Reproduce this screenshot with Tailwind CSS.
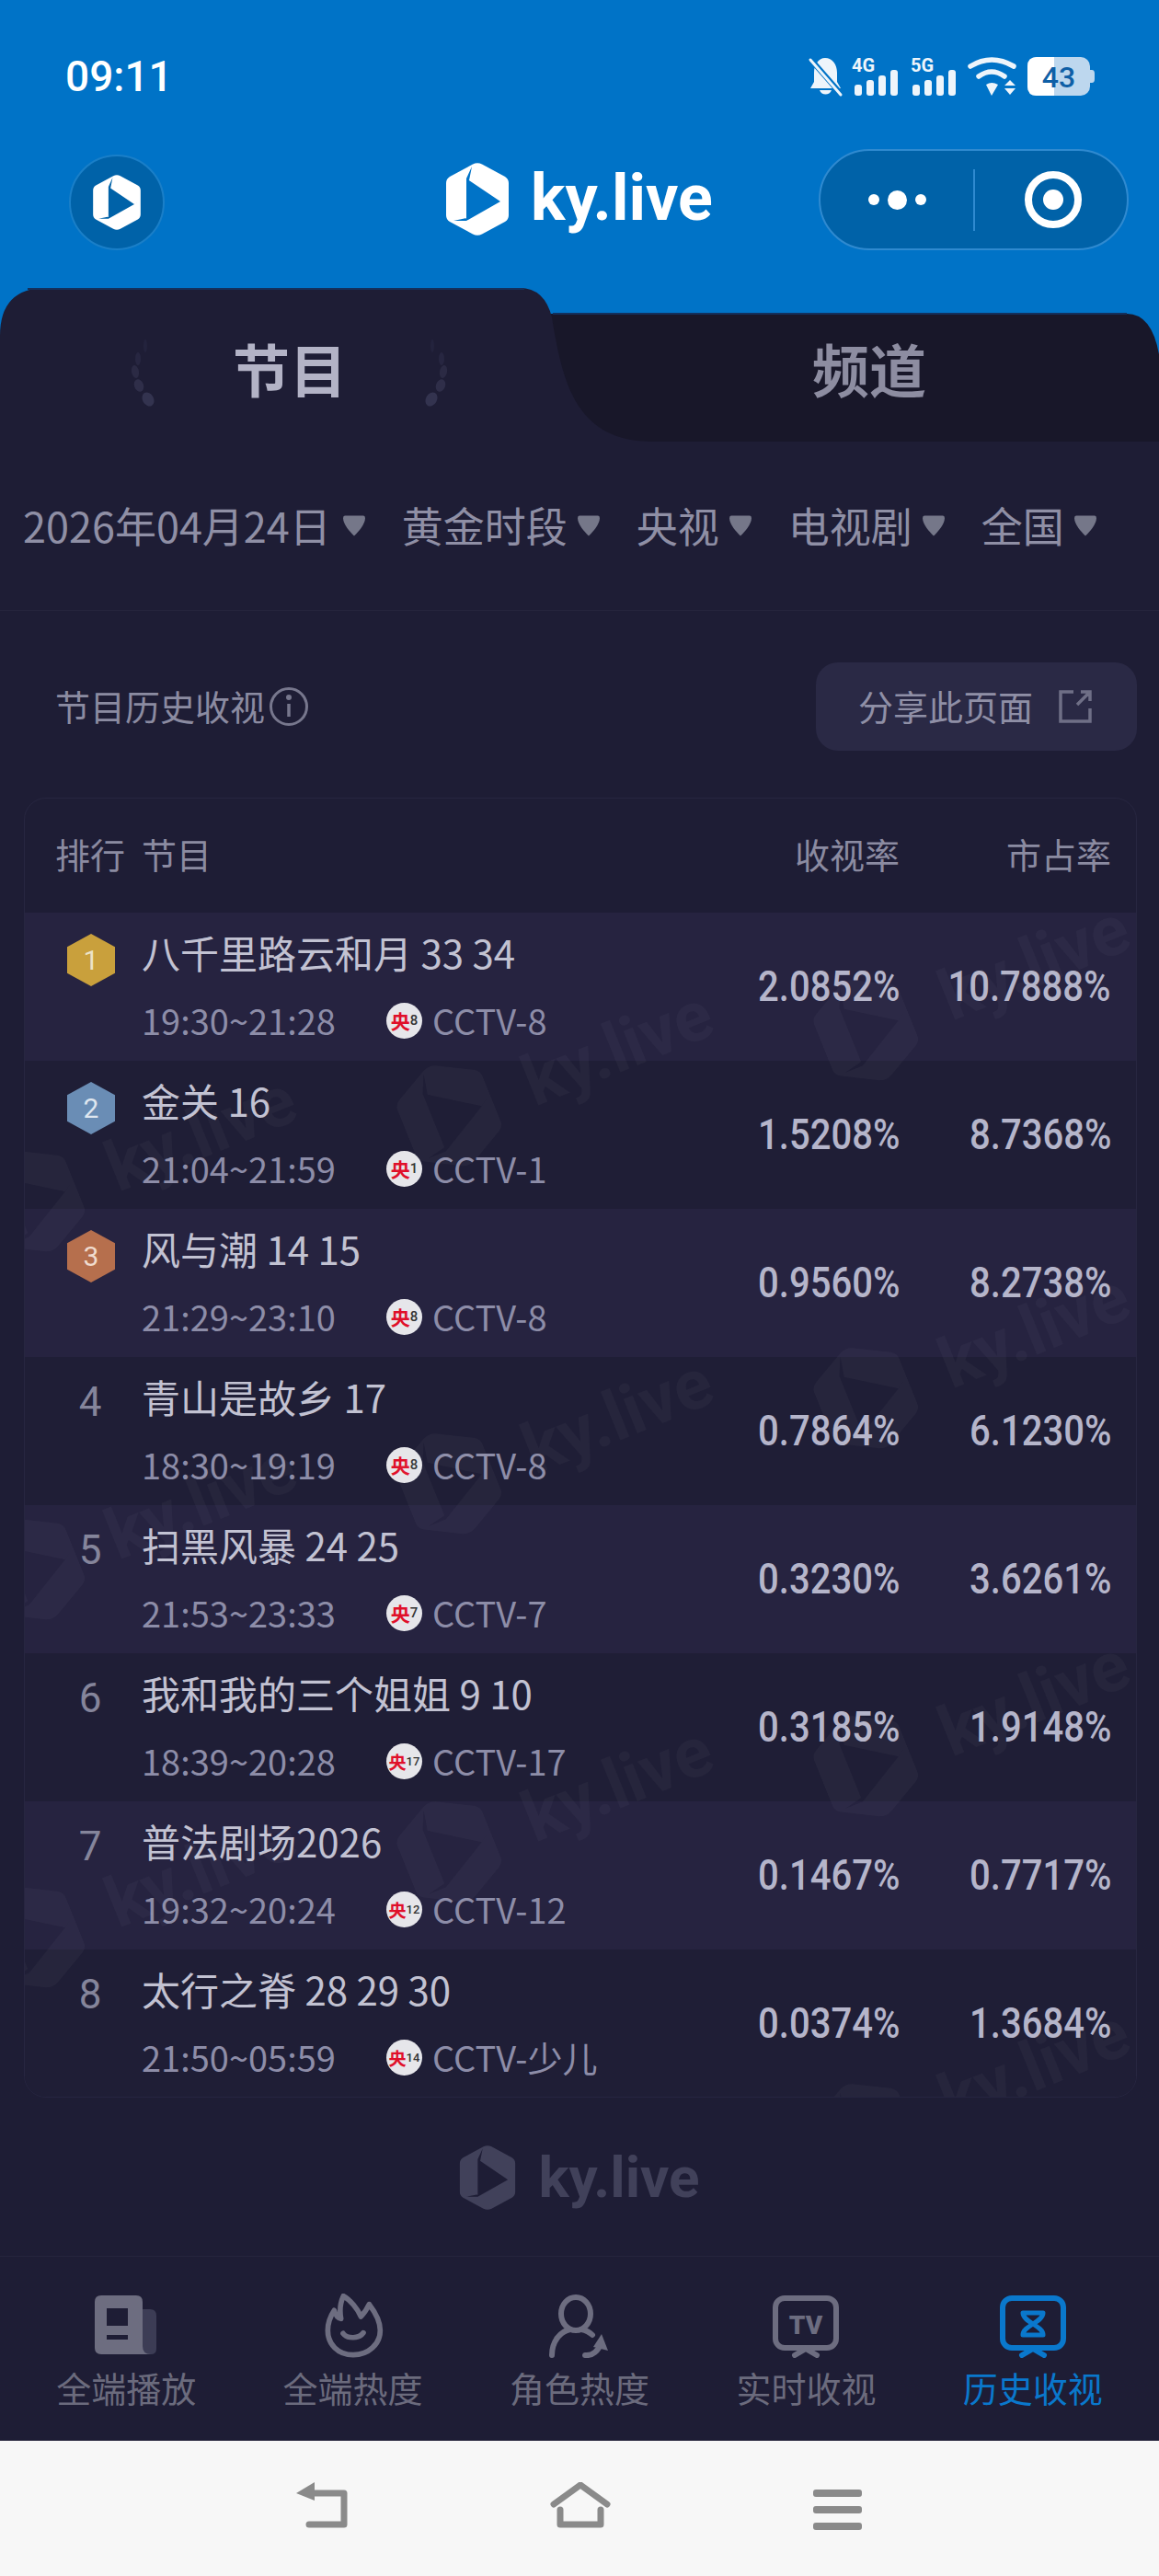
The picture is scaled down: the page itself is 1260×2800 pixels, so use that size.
<!DOCTYPE html>
<html lang="zh-CN">
  <head>
    <meta charset="UTF-8" />
    <meta name="viewport" content="width=device-width, initial-scale=1.0" />
    <title>ky.live 节目历史收视</title>
    <script src="https://cdn.jsdelivr.net/npm/@tailwindcss/browser@4"></script>
  </head>
  <body class="bg-[#1e1d35] font-['Noto_Sans_CJK_SC','Liberation_Sans',sans-serif]">
    <!-- logo shape, reused everywhere -->
    <svg class="hidden">
      <symbol id="logo" viewBox="0 0 68 79">
        <path fill="currentColor" fill-rule="evenodd" d="M29 1.5Q34 -1 39 1.5L64 15Q68 17.5 68 22L68 57Q68 61.5 64 64L39 77.5Q34 80 29 77.5L4 64Q0 61.5 0 57L0 22Q0 17.5 4 15ZM22 17L59 42L22 63ZM22 17L28 4L25 19ZM59 42L68 36L56 44ZM22 63L8 63L22 60Z" />
      </symbol>
    </svg>

    <div class="w-[1260px] h-[2800px] flex flex-col overflow-hidden">
      <!-- Status bar + header -->
      <div class="bg-[#0073c7] h-[313px] shrink-0">
        <div class="h-[162px] flex justify-between pl-[71px] pr-[70px] pt-[56px]">
          <span class="font-['Roboto',sans-serif] font-medium text-[46px] leading-[54px] text-white">09:11</span>
          <svg width="310" height="42" viewBox="0 0 310 42" class="mt-[6px] overflow-visible">
            <!-- bell -->
            <path fill="#eef5fb" d="M17 1C25 1 30 8 30 17V27L34 34H1L5 27V17C5 8 10 1 17 1ZM11 36H24C22 42 13 42 11 36Z" />
            <path stroke="#0073c7" stroke-width="6" d="M0 1L35 41" />
            <path stroke="#eef5fb" stroke-width="3" stroke-linecap="round" d="M1 3L34 41" />
            <!-- signal -->
            <text x="46" y="16" font-family="Roboto" font-weight="700" font-size="20" fill="#eef5fb">4G</text>
            <g fill="#eef5fb">
              <rect x="49" y="30" width="8" height="12" rx="3" /><rect x="62" y="25" width="8" height="17" rx="3" /><rect x="75" y="20" width="8" height="22" rx="3" /><rect x="88" y="14" width="8" height="28" rx="3" />
            </g>
            <text x="110" y="16" font-family="Roboto" font-weight="700" font-size="20" fill="#eef5fb">5G</text>
            <g fill="#eef5fb">
              <rect x="112" y="30" width="8" height="12" rx="3" /><rect x="125" y="25" width="8" height="17" rx="3" /><rect x="138" y="20" width="8" height="22" rx="3" /><rect x="151" y="14" width="8" height="28" rx="3" />
            </g>
            <!-- wifi -->
            <g fill="none" stroke="#eef5fb" stroke-width="5.5" stroke-linecap="round">
              <path d="M175 10Q198 -4 222 10" /><path d="M184 21Q198 11 212 21" />
            </g>
            <g fill="#eef5fb">
              <path d="M192 30Q198 26 205 30L198 42ZM212 31L218 25L224 31ZM212 34H224L218 41Z" />
            </g>
            <!-- battery -->
            <rect x="237" y="0" width="68" height="42" rx="10" fill="#bdd7ee" />
            <path d="M247 0H266V42H247Q237 42 237 32V10Q237 0 247 0Z" fill="#fff" />
            <path d="M305 14H307Q310 14 310 18V24Q310 28 307 28H305Z" fill="#bdd7ee" />
            <text x="271" y="33" text-anchor="middle" font-family="Roboto" font-weight="500" font-size="32" fill="#0f5fa6">43</text>
          </svg>
        </div>
        <div class="relative flex justify-between items-start pl-[75px] pr-[33px]">
          <div class="w-[104px] h-[104px] mt-[6px] rounded-full bg-[#0062a8] border-2 border-[#1a7fc8] flex items-center justify-center text-white">
            <svg width="52" height="60"><use href="#logo" /></svg>
          </div>
          <div class="absolute left-[485px] top-[15px] flex items-center gap-[24px] text-white">
            <svg width="68" height="79"><use href="#logo" /></svg>
            <span class="font-['Roboto',sans-serif] font-bold text-[70px] leading-[70px] -mt-[4px]">ky.live</span>
          </div>
          <div class="w-[337px] h-[110px] rounded-full bg-[#0062a8] border-2 border-[#2f8ad0] flex items-center">
            <div class="w-[168px] h-[67px] border-r-2 border-[#2f8ad0] flex items-center justify-center gap-[9px]">
              <span class="w-[12px] h-[12px] rounded-full bg-white"></span>
              <span class="w-[21px] h-[21px] rounded-full bg-white"></span>
              <span class="w-[12px] h-[12px] rounded-full bg-white"></span>
            </div>
            <div class="flex-1 flex justify-center pl-[4px]">
              <div class="w-[62px] h-[62px] rounded-full border-[8px] border-white flex items-center justify-center">
                <span class="w-[22px] h-[22px] rounded-full bg-white"></span>
              </div>
            </div>
          </div>
        </div>
      </div>

      <!-- Tabs -->
      <div class="relative h-[167px] shrink-0 grid grid-cols-2">
        <svg class="absolute left-0 top-0" width="1260" height="167" viewBox="0 313 1260 167">
          <rect x="0" y="313" width="1260" height="167" fill="#0073c7" />
          <path d="M590 341H1225Q1252 341 1260 385V480H590Z" fill="#181729" />
          <path d="M0 480V365Q0 313 50 313H565Q592 313 600 345C612 420 628 480 710 480Z" fill="#1e1d35" />
          <path d="M601 341H1225" stroke="#14305c" stroke-width="2" fill="none" />
          <path d="M30 314H570" stroke="#14305c" stroke-width="2" fill="none" />
          <g fill="#33334f">
            <ellipse cx="158" cy="376" rx="2" ry="7" opacity=".3" />
            <ellipse cx="150" cy="390" rx="3" ry="7" opacity=".45" />
            <ellipse cx="147" cy="404" rx="4" ry="7" opacity=".6" transform="rotate(-10 147 404)" />
            <ellipse cx="151" cy="419" rx="5" ry="7" opacity=".8" transform="rotate(-20 151 419)" />
            <ellipse cx="161" cy="434" rx="6" ry="8" transform="rotate(-30 161 434)" />
            <ellipse cx="470" cy="376" rx="2" ry="7" opacity=".3" />
            <ellipse cx="480" cy="390" rx="3" ry="7" opacity=".45" />
            <ellipse cx="482" cy="404" rx="4" ry="7" opacity=".6" transform="rotate(10 482 404)" />
            <ellipse cx="479" cy="419" rx="5" ry="7" opacity=".8" transform="rotate(20 479 419)" />
            <ellipse cx="469" cy="434" rx="6" ry="8" transform="rotate(30 469 434)" />
          </g>
        </svg>
        <div class="relative flex justify-center pt-[56px] text-[62px] leading-[62px] font-bold text-[#b3b3c6]">节目</div>
        <div class="relative flex justify-center pt-[56px] text-[62px] leading-[62px] font-bold text-[#8d8da1]">频道</div>
      </div>

      <!-- Filters -->
      <div class="h-[184px] shrink-0 border-b border-[#26253d] flex items-center pl-[25px] gap-[40px] text-[45px] text-[#8f8fa5]">
        <div class="flex items-center gap-[13px]"><span class="-mt-[2px]">2026年04月24日</span><svg width="24" height="23" viewBox="0 0 26 24"><path fill="#757789" d="M2 0H24Q26 0 26 3C26 10 18 19 13 24C8 19 0 10 0 3Q0 0 2 0Z" /></svg></div>
        <div class="flex items-center gap-[11px]"><span class="-mt-[2px]">黄金时段</span><svg width="24" height="23" viewBox="0 0 26 24"><path fill="#757789" d="M2 0H24Q26 0 26 3C26 10 18 19 13 24C8 19 0 10 0 3Q0 0 2 0Z" /></svg></div>
        <div class="flex items-center gap-[11px]"><span class="-mt-[2px]">央视</span><svg width="24" height="23" viewBox="0 0 26 24"><path fill="#757789" d="M2 0H24Q26 0 26 3C26 10 18 19 13 24C8 19 0 10 0 3Q0 0 2 0Z" /></svg></div>
        <div class="flex items-center gap-[11px]"><span class="-mt-[2px]">电视剧</span><svg width="24" height="23" viewBox="0 0 26 24"><path fill="#757789" d="M2 0H24Q26 0 26 3C26 10 18 19 13 24C8 19 0 10 0 3Q0 0 2 0Z" /></svg></div>
        <div class="flex items-center gap-[11px]"><span class="-mt-[2px]">全国</span><svg width="24" height="23" viewBox="0 0 26 24"><path fill="#757789" d="M2 0H24Q26 0 26 3C26 10 18 19 13 24C8 19 0 10 0 3Q0 0 2 0Z" /></svg></div>
      </div>

      <!-- Section title -->
      <div class="h-[203px] shrink-0 flex justify-between items-start pl-[60px] pr-[24px] pt-[56px]">
        <div class="flex items-center h-[96px] gap-[4px] text-[38px] text-[#8b8ba1]">
          <span class="-mt-[3px]">节目历史收视</span>
          <svg width="44" height="44" viewBox="0 0 44 44" fill="none" stroke="#77778d" stroke-width="3">
            <circle cx="22" cy="22" r="19.5" />
            <path d="M22 19V33" stroke-width="3.5" />
            <circle cx="22" cy="12" r="1.5" fill="#77778d" />
          </svg>
        </div>
        <div class="w-[349px] h-[96px] rounded-[24px] bg-[#2a2945] flex items-center pl-[46px] gap-[28px] text-[38px] text-[#8f8fa6]">
          <span class="-mt-[4px]">分享此页面</span>
          <svg width="36" height="36" viewBox="0 0 36 36" fill="none" stroke="#6f6f86" stroke-width="3.5">
            <path d="M16 2H2V34H34V20M20 16L34 2M24 2H34V12" />
          </svg>
        </div>
      </div>

      <!-- Table -->
      <div class="relative ml-[26px] mr-[24px] h-[1413px] shrink-0 rounded-[24px] border border-[#272640] overflow-hidden">
        <div class="h-[124px] pb-[6px] flex items-center text-[38px] text-[#8b8ba1]">
          <div class="w-[127px] pl-[33px]">排行</div>
          <div class="flex-1">节目</div>
          <div class="w-[200px] text-right">收视率</div>
          <div class="w-[257px] pr-[27px] text-right">市占率</div>
        </div>

        <div class="h-[161px] bg-[#262340] flex">
          <div class="w-[127px] pl-[46px] pt-[23px]">
            <div class="w-[52px] h-[57px] bg-[#c9a03c] [clip-path:polygon(50%_0,100%_25%,100%_75%,50%_100%,0_75%,0_25%)] flex items-center justify-center font-['Roboto',sans-serif] text-[30px] text-[#ece3c8]">1</div>
          </div>
          <div class="flex-1 pt-[18px]">
            <div class="text-[42px] leading-[50px] text-[#c2c2d2]">八千里路云和月 33 34</div>
            <div class="mt-[24px] flex items-center text-[38px] leading-[50px] text-[#8d8da8]">
              <span class="w-[266px]">19:30~21:28</span>
              <span class="w-[39px] h-[39px] rounded-full bg-[#e6e6ea] flex items-center justify-center font-bold text-[#e0102a] text-[21px] leading-none mr-[11px]">央<span class="font-['Roboto',sans-serif] font-medium text-[#333] text-[15px]">8</span></span>
              CCTV-8
            </div>
          </div>
          <div class="w-[200px] flex items-center justify-end"><span class="inline-block origin-right scale-x-[0.87] font-['Roboto',sans-serif] font-medium text-[46px] text-[#b5b5ca]">2.0852%</span></div>
          <div class="w-[257px] pr-[27px] flex items-center justify-end"><span class="inline-block origin-right scale-x-[0.87] font-['Roboto',sans-serif] font-medium text-[46px] text-[#b5b5ca]">10.7888%</span></div>
        </div>

        <div class="h-[161px] bg-[#1f1e36] flex">
          <div class="w-[127px] pl-[46px] pt-[23px]">
            <div class="w-[52px] h-[57px] bg-[#6a8db5] [clip-path:polygon(50%_0,100%_25%,100%_75%,50%_100%,0_75%,0_25%)] flex items-center justify-center font-['Roboto',sans-serif] text-[30px] text-[#dfe6ef]">2</div>
          </div>
          <div class="flex-1 pt-[18px]">
            <div class="text-[42px] leading-[50px] text-[#c2c2d2]">金关 16</div>
            <div class="mt-[24px] flex items-center text-[38px] leading-[50px] text-[#8d8da8]">
              <span class="w-[266px]">21:04~21:59</span>
              <span class="w-[39px] h-[39px] rounded-full bg-[#e6e6ea] flex items-center justify-center font-bold text-[#e0102a] text-[21px] leading-none mr-[11px]">央<span class="font-['Roboto',sans-serif] font-medium text-[#333] text-[15px]">1</span></span>
              CCTV-1
            </div>
          </div>
          <div class="w-[200px] flex items-center justify-end"><span class="inline-block origin-right scale-x-[0.87] font-['Roboto',sans-serif] font-medium text-[46px] text-[#b5b5ca]">1.5208%</span></div>
          <div class="w-[257px] pr-[27px] flex items-center justify-end"><span class="inline-block origin-right scale-x-[0.87] font-['Roboto',sans-serif] font-medium text-[46px] text-[#b5b5ca]">8.7368%</span></div>
        </div>

        <div class="h-[161px] bg-[#262340] flex">
          <div class="w-[127px] pl-[46px] pt-[23px]">
            <div class="w-[52px] h-[57px] bg-[#b66f4d] [clip-path:polygon(50%_0,100%_25%,100%_75%,50%_100%,0_75%,0_25%)] flex items-center justify-center font-['Roboto',sans-serif] text-[30px] text-[#f0dccf]">3</div>
          </div>
          <div class="flex-1 pt-[18px]">
            <div class="text-[42px] leading-[50px] text-[#c2c2d2]">风与潮 14 15</div>
            <div class="mt-[24px] flex items-center text-[38px] leading-[50px] text-[#8d8da8]">
              <span class="w-[266px]">21:29~23:10</span>
              <span class="w-[39px] h-[39px] rounded-full bg-[#e6e6ea] flex items-center justify-center font-bold text-[#e0102a] text-[21px] leading-none mr-[11px]">央<span class="font-['Roboto',sans-serif] font-medium text-[#333] text-[15px]">8</span></span>
              CCTV-8
            </div>
          </div>
          <div class="w-[200px] flex items-center justify-end"><span class="inline-block origin-right scale-x-[0.87] font-['Roboto',sans-serif] font-medium text-[46px] text-[#b5b5ca]">0.9560%</span></div>
          <div class="w-[257px] pr-[27px] flex items-center justify-end"><span class="inline-block origin-right scale-x-[0.87] font-['Roboto',sans-serif] font-medium text-[46px] text-[#b5b5ca]">8.2738%</span></div>
        </div>

        <div class="h-[161px] bg-[#1f1e36] flex">
          <div class="w-[127px] pl-[45px] pt-[24px]"><div class="w-[52px] text-center font-['Roboto',sans-serif] text-[44px] leading-[50px] text-[#85859b]">4</div></div>
          <div class="flex-1 pt-[18px]">
            <div class="text-[42px] leading-[50px] text-[#c2c2d2]">青山是故乡 17</div>
            <div class="mt-[24px] flex items-center text-[38px] leading-[50px] text-[#8d8da8]">
              <span class="w-[266px]">18:30~19:19</span>
              <span class="w-[39px] h-[39px] rounded-full bg-[#e6e6ea] flex items-center justify-center font-bold text-[#e0102a] text-[21px] leading-none mr-[11px]">央<span class="font-['Roboto',sans-serif] font-medium text-[#333] text-[15px]">8</span></span>
              CCTV-8
            </div>
          </div>
          <div class="w-[200px] flex items-center justify-end"><span class="inline-block origin-right scale-x-[0.87] font-['Roboto',sans-serif] font-medium text-[46px] text-[#b5b5ca]">0.7864%</span></div>
          <div class="w-[257px] pr-[27px] flex items-center justify-end"><span class="inline-block origin-right scale-x-[0.87] font-['Roboto',sans-serif] font-medium text-[46px] text-[#b5b5ca]">6.1230%</span></div>
        </div>

        <div class="h-[161px] bg-[#262340] flex">
          <div class="w-[127px] pl-[45px] pt-[24px]"><div class="w-[52px] text-center font-['Roboto',sans-serif] text-[44px] leading-[50px] text-[#85859b]">5</div></div>
          <div class="flex-1 pt-[18px]">
            <div class="text-[42px] leading-[50px] text-[#c2c2d2]">扫黑风暴 24 25</div>
            <div class="mt-[24px] flex items-center text-[38px] leading-[50px] text-[#8d8da8]">
              <span class="w-[266px]">21:53~23:33</span>
              <span class="w-[39px] h-[39px] rounded-full bg-[#e6e6ea] flex items-center justify-center font-bold text-[#e0102a] text-[21px] leading-none mr-[11px]">央<span class="font-['Roboto',sans-serif] font-medium text-[#333] text-[15px]">7</span></span>
              CCTV-7
            </div>
          </div>
          <div class="w-[200px] flex items-center justify-end"><span class="inline-block origin-right scale-x-[0.87] font-['Roboto',sans-serif] font-medium text-[46px] text-[#b5b5ca]">0.3230%</span></div>
          <div class="w-[257px] pr-[27px] flex items-center justify-end"><span class="inline-block origin-right scale-x-[0.87] font-['Roboto',sans-serif] font-medium text-[46px] text-[#b5b5ca]">3.6261%</span></div>
        </div>

        <div class="h-[161px] bg-[#1f1e36] flex">
          <div class="w-[127px] pl-[45px] pt-[24px]"><div class="w-[52px] text-center font-['Roboto',sans-serif] text-[44px] leading-[50px] text-[#85859b]">6</div></div>
          <div class="flex-1 pt-[18px]">
            <div class="text-[42px] leading-[50px] text-[#c2c2d2]">我和我的三个姐姐 9 10</div>
            <div class="mt-[24px] flex items-center text-[38px] leading-[50px] text-[#8d8da8]">
              <span class="w-[266px]">18:39~20:28</span>
              <span class="w-[39px] h-[39px] rounded-full bg-[#e6e6ea] flex items-center justify-center font-bold text-[#e0102a] text-[19px] leading-none mr-[11px]">央<span class="font-['Roboto',sans-serif] font-medium text-[#333] text-[13px]">17</span></span>
              CCTV-17
            </div>
          </div>
          <div class="w-[200px] flex items-center justify-end"><span class="inline-block origin-right scale-x-[0.87] font-['Roboto',sans-serif] font-medium text-[46px] text-[#b5b5ca]">0.3185%</span></div>
          <div class="w-[257px] pr-[27px] flex items-center justify-end"><span class="inline-block origin-right scale-x-[0.87] font-['Roboto',sans-serif] font-medium text-[46px] text-[#b5b5ca]">1.9148%</span></div>
        </div>

        <div class="h-[161px] bg-[#262340] flex">
          <div class="w-[127px] pl-[45px] pt-[24px]"><div class="w-[52px] text-center font-['Roboto',sans-serif] text-[44px] leading-[50px] text-[#85859b]">7</div></div>
          <div class="flex-1 pt-[18px]">
            <div class="text-[42px] leading-[50px] text-[#c2c2d2]">普法剧场2026</div>
            <div class="mt-[24px] flex items-center text-[38px] leading-[50px] text-[#8d8da8]">
              <span class="w-[266px]">19:32~20:24</span>
              <span class="w-[39px] h-[39px] rounded-full bg-[#e6e6ea] flex items-center justify-center font-bold text-[#e0102a] text-[19px] leading-none mr-[11px]">央<span class="font-['Roboto',sans-serif] font-medium text-[#333] text-[13px]">12</span></span>
              CCTV-12
            </div>
          </div>
          <div class="w-[200px] flex items-center justify-end"><span class="inline-block origin-right scale-x-[0.87] font-['Roboto',sans-serif] font-medium text-[46px] text-[#b5b5ca]">0.1467%</span></div>
          <div class="w-[257px] pr-[27px] flex items-center justify-end"><span class="inline-block origin-right scale-x-[0.87] font-['Roboto',sans-serif] font-medium text-[46px] text-[#b5b5ca]">0.7717%</span></div>
        </div>

        <div class="h-[161px] bg-[#1f1e36] flex">
          <div class="w-[127px] pl-[45px] pt-[24px]"><div class="w-[52px] text-center font-['Roboto',sans-serif] text-[44px] leading-[50px] text-[#85859b]">8</div></div>
          <div class="flex-1 pt-[18px]">
            <div class="text-[42px] leading-[50px] text-[#c2c2d2]">太行之脊 28 29 30</div>
            <div class="mt-[24px] flex items-center text-[38px] leading-[50px] text-[#8d8da8]">
              <span class="w-[266px]">21:50~05:59</span>
              <span class="w-[39px] h-[39px] rounded-full bg-[#e6e6ea] flex items-center justify-center font-bold text-[#e0102a] text-[19px] leading-none mr-[11px]">央<span class="font-['Roboto',sans-serif] font-medium text-[#333] text-[13px]">14</span></span>
              CCTV-少儿
            </div>
          </div>
          <div class="w-[200px] flex items-center justify-end"><span class="inline-block origin-right scale-x-[0.87] font-['Roboto',sans-serif] font-medium text-[46px] text-[#b5b5ca]">0.0374%</span></div>
          <div class="w-[257px] pr-[27px] flex items-center justify-end"><span class="inline-block origin-right scale-x-[0.87] font-['Roboto',sans-serif] font-medium text-[46px] text-[#b5b5ca]">1.3684%</span></div>
        </div>

        <!-- Watermark tiles -->
        <div class="absolute inset-0 pointer-events-none text-white/[0.03] font-['Roboto',sans-serif] font-bold text-[76px]">
          <div class="absolute left-[855px] top-[146px] -rotate-[22deg] flex items-center gap-[40px]"><svg width="100" height="116"><use href="#logo" /></svg>ky.live</div>
          <div class="absolute left-[855px] top-[546px] -rotate-[22deg] flex items-center gap-[40px]"><svg width="100" height="116"><use href="#logo" /></svg>ky.live</div>
          <div class="absolute left-[855px] top-[946px] -rotate-[22deg] flex items-center gap-[40px]"><svg width="100" height="116"><use href="#logo" /></svg>ky.live</div>
          <div class="absolute left-[855px] top-[1346px] -rotate-[22deg] flex items-center gap-[40px]"><svg width="100" height="116"><use href="#logo" /></svg>ky.live</div>
          <div class="absolute left-[402px] top-[239px] -rotate-[22deg] flex items-center gap-[40px]"><svg width="100" height="116"><use href="#logo" /></svg>ky.live</div>
          <div class="absolute left-[402px] top-[639px] -rotate-[22deg] flex items-center gap-[40px]"><svg width="100" height="116"><use href="#logo" /></svg>ky.live</div>
          <div class="absolute left-[402px] top-[1039px] -rotate-[22deg] flex items-center gap-[40px]"><svg width="100" height="116"><use href="#logo" /></svg>ky.live</div>
          <div class="absolute -left-[51px] top-[332px] -rotate-[22deg] flex items-center gap-[40px]"><svg width="100" height="116"><use href="#logo" /></svg>ky.live</div>
          <div class="absolute -left-[51px] top-[732px] -rotate-[22deg] flex items-center gap-[40px]"><svg width="100" height="116"><use href="#logo" /></svg>ky.live</div>
          <div class="absolute -left-[51px] top-[1132px] -rotate-[22deg] flex items-center gap-[40px]"><svg width="100" height="116"><use href="#logo" /></svg>ky.live</div>
        </div>
      </div>

      <!-- Footer logo -->
      <div class="h-[172px] shrink-0 flex items-center justify-center gap-[24px] text-[#41415a] pt-[2px]">
        <svg width="62" height="70"><use href="#logo" /></svg>
        <span class="font-['Roboto',sans-serif] font-bold text-[62px] leading-[60px]">ky.live</span>
      </div>

      <!-- Bottom tabs -->
      <div class="h-[201px] shrink-0 border-t border-[#26253d] grid grid-cols-5 px-[14px] pt-[40px] text-[38px] leading-[50px] text-[#6b6b7d]">
        <div class="flex flex-col items-center">
          <svg width="70" height="70" viewBox="0 0 70 70">
            <path fill="#3c3c55" d="M50 17H61Q68 17 68 24V60Q68 66 62 66H50Z" />
            <path fill="#6d6d80" fill-rule="evenodd" d="M8 2H46Q53 2 53 9V57Q53 66 62 66H8Q1 66 1 59V9Q1 2 8 2ZM14 16V35H37V16ZM14 45V50H37V45Z" />
          </svg>
          <span class="mt-[7px]">全端播放</span>
        </div>
        <div class="flex flex-col items-center">
          <svg width="70" height="70" viewBox="775 40 210 210" fill="none" stroke="#6d6d80" stroke-width="17" stroke-linejoin="round" stroke-linecap="round">
            <path d="M880 240C830 240 797 205 797 160C797 130 808 110 818 95C822 110 830 120 840 122C835 95 840 65 848 48C870 60 895 90 905 115C915 105 925 90 932 75C955 105 968 130 968 160C968 205 930 240 880 240Z" />
            <path d="M847 170C860 188 900 188 913 168" />
          </svg>
          <span class="mt-[7px]">全端热度</span>
        </div>
        <div class="flex flex-col items-center">
          <svg width="70" height="70" viewBox="3 0 70 70" fill="none" stroke="#6d6d80" stroke-width="6" stroke-linecap="round">
            <ellipse cx="34" cy="22" rx="16" ry="18" />
            <path d="M8 67C8 52 17 41 28 39M40 39C45 40 49 42 52 45" />
            <path d="M44 67C52 68 59 62 61 54" />
            <path fill="#6d6d80" stroke="none" d="M62 44L69 62L53 58Z" />
          </svg>
          <span class="mt-[7px]">角色热度</span>
        </div>
        <div class="flex flex-col items-center">
          <svg width="72" height="70" viewBox="0 0 72 70" fill="none" stroke="#6d6d80" stroke-width="6" stroke-linecap="round" stroke-linejoin="round">
            <rect x="3" y="5" width="66" height="54" rx="10" />
            <path d="M24 67L36 60L48 67" />
            <text x="36" y="44" text-anchor="middle" font-family="Roboto" font-weight="900" font-size="28" fill="#6d6d80" stroke="none">TV</text>
          </svg>
          <span class="mt-[7px]">实时收视</span>
        </div>
        <div class="flex flex-col items-center text-[#0a78cc]">
          <svg width="72" height="70" viewBox="0 0 72 70" fill="none" stroke="#0a78cc" stroke-width="6" stroke-linecap="round" stroke-linejoin="round">
            <rect x="3" y="5" width="66" height="54" rx="10" />
            <path d="M24 67L36 60L48 67" />
            <path stroke-width="5" d="M25 21H47C47 31 25 35 25 45H47C47 35 25 31 25 21Z" />
          </svg>
          <span class="mt-[7px]">历史收视</span>
        </div>
      </div>

      <!-- Android nav bar -->
      <div class="flex-1 bg-[#f7f7f7] flex items-start pl-[322px] gap-[220px] pt-[45px]">
        <svg width="56" height="50" viewBox="0 0 56 50" fill="none" stroke="#8a8a8a" stroke-width="7" stroke-linecap="round" stroke-linejoin="round">
          <path d="M16 12H52V46H14" />
          <path fill="#8a8a8a" stroke="none" d="M20 0V20L0 12Z" />
        </svg>
        <svg width="66" height="50" viewBox="0 0 66 50" fill="none" stroke="#8a8a8a" stroke-width="7" stroke-linecap="round" stroke-linejoin="round">
          <path d="M4 24L33 3L62 24" />
          <path d="M11 30V46H55V30" />
        </svg>
        <div class="flex flex-col gap-[10px] pt-[8px]">
          <span class="block w-[53px] h-[8px] rounded-[3px] bg-[#8a8a8a]"></span>
          <span class="block w-[53px] h-[8px] rounded-[3px] bg-[#8a8a8a]"></span>
          <span class="block w-[53px] h-[8px] rounded-[3px] bg-[#8a8a8a]"></span>
        </div>
      </div>
    </div>
  </body>
</html>
